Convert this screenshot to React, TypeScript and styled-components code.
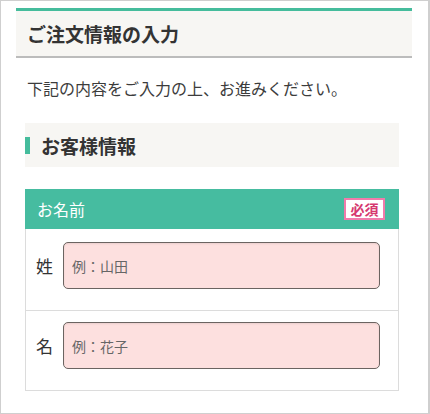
import React from "react";
import styled, { createGlobalStyle } from "styled-components";

const GlobalStyle = createGlobalStyle`
  html, body {
    margin: 0;
    padding: 0;
    background: #ffffff;
  }
  body {
    font-family: "Noto Sans CJK JP", "Noto Sans", sans-serif;
    color: #333333;
  }
  * {
    box-sizing: border-box;
  }
`;

const Frame = styled.div`
  width: 430px;
  height: 414px;
  border: 1px solid #cfcfcf;
  border-right-width: 2px;
  padding: 7px 16px 0 15px;
  overflow: hidden;
`;

const PageHeader = styled.h1`
  margin: 0;
  height: 50px;
  border-top: 3px solid #45bc9c;
  border-bottom: 2px solid #bcbcbc;
  background: #f7f6f3;
  padding-left: 11px;
  display: flex;
  align-items: center;
  font-size: 19px;
  font-weight: 700;
  color: #333333;
  line-height: 1;
`;

const Lead = styled.p`
  margin: 20px 0 0 11px;
  font-size: 16px;
  line-height: 20px;
  color: #3c3c3c;
`;

const Content = styled.div`
  padding: 0 13px 0 9px;
`;

const SectionTitle = styled.h2`
  margin: 25px 0 0;
  height: 44px;
  background: #f7f6f3;
  display: flex;
  align-items: center;
  gap: 11px;
  font-size: 19px;
  font-weight: 700;
  color: #333333;
  line-height: 1;

  &::before {
    content: "";
    width: 5px;
    height: 17px;
    background: #45bc9c;
  }
`;

const FormTable = styled.div`
  margin-top: 22px;
  border: 1px solid #dcdcdc;
  border-top: none;
`;

const TableHead = styled.div`
  height: 40px;
  background: #46bca0;
  display: flex;
  align-items: center;
  justify-content: space-between;
  padding: 0 14px 0 12px;
  color: #ffffff;
  font-size: 16px;
  margin: 0 -1px;
`;

const RequiredBadge = styled.span`
  display: inline-flex;
  align-items: center;
  justify-content: center;
  width: 41px;
  height: 22px;
  background: #ffffff;
  border: 2px solid #f07bab;
  color: #d6386f;
  font-size: 14px;
  font-weight: 700;
  line-height: 1;
`;

const Row = styled.div<{ $first?: boolean }>`
  display: flex;
  align-items: center;
  gap: 10px;
  padding: ${(p) => (p.$first ? "13px" : "11px")} 18px 21px 10px;
  border-top: ${(p) => (p.$first ? "none" : "1px solid #dcdcdc")};
`;

const Label = styled.span`
  width: 17px;
  font-size: 17px;
  color: #333333;
  line-height: 1;
`;

const TextInput = styled.input`
  flex: 1;
  height: 47px;
  border: 1px solid #6b6461;
  border-radius: 5px;
  background: #fde0df;
  box-shadow: inset 0 1px 2px rgba(0, 0, 0, 0.08);
  padding: 0 8px;
  font-family: "Noto Sans CJK JP", "Noto Sans", sans-serif;
  font-size: 14px;
  color: #333333;
  outline: none;

  &::placeholder {
    color: #666666;
  }
`;

const fields = [
  { label: "姓", placeholder: "例：山田" },
  { label: "名", placeholder: "例：花子" },
];

export default function App() {
  return (
    <>
      <GlobalStyle />
      <Frame>
        <PageHeader>ご注文情報の入力</PageHeader>
        <Lead>下記の内容をご入力の上、お進みください。</Lead>
        <Content>
          <SectionTitle>お客様情報</SectionTitle>
          <FormTable>
            <TableHead>
              <span>お名前</span>
              <RequiredBadge>必須</RequiredBadge>
            </TableHead>
            {fields.map((f, i) => (
              <Row key={f.label} $first={i === 0}>
                <Label>{f.label}</Label>
                <TextInput placeholder={f.placeholder} />
              </Row>
            ))}
          </FormTable>
        </Content>
      </Frame>
    </>
  );
}
